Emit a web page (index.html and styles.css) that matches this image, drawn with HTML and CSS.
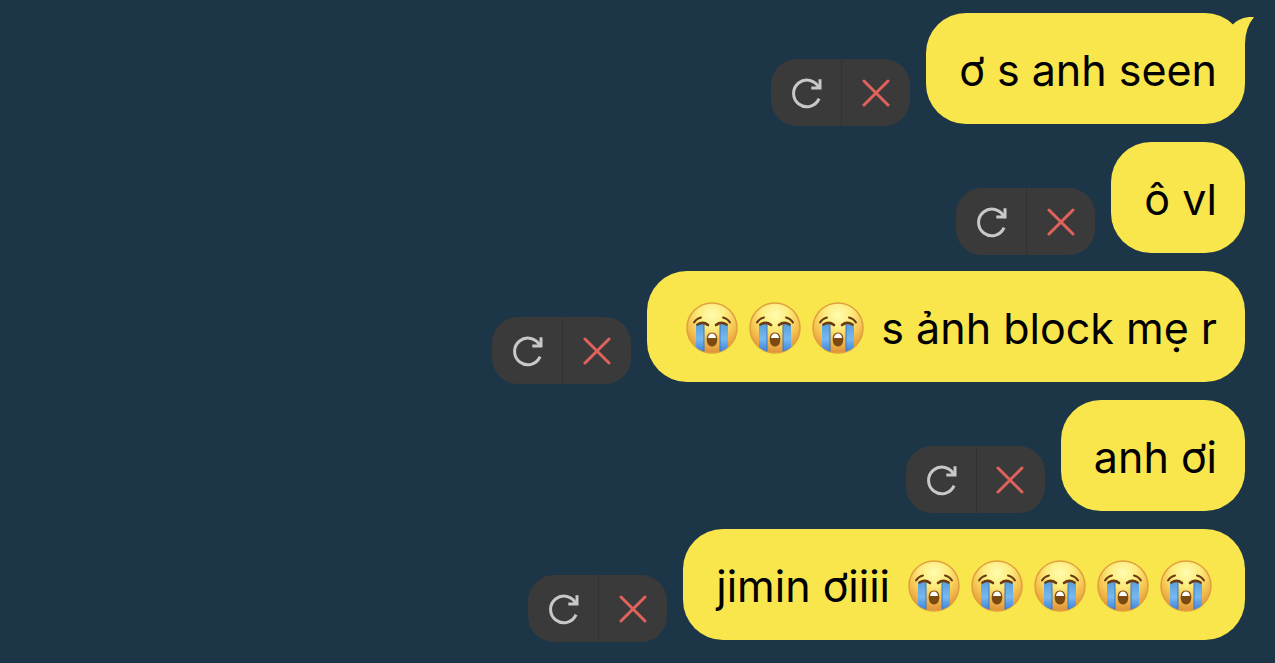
FILE: index.html
```html
<!DOCTYPE html>
<html lang="vi">
<head>
    <meta charset="UTF-8">
    <meta name="viewport" content="width=device-width, initial-scale=1.0">
    <title>Chat</title>
    <link rel="stylesheet" href="styles.css">
</head>
<body>

    <!-- shared icons -->
    <svg class="sprite" aria-hidden="true">
        <defs>
            <radialGradient id="face" cx="50%" cy="24%" r="78%">
                <stop offset="0" stop-color="#fffcb0"/>
                <stop offset="0.35" stop-color="#fdec7c"/>
                <stop offset="0.65" stop-color="#f6c24f"/>
                <stop offset="1" stop-color="#dd8c36"/>
            </radialGradient>
            <linearGradient id="tear" x1="0" y1="0" x2="0" y2="1">
                <stop offset="0" stop-color="#5a9fdc"/>
                <stop offset="0.5" stop-color="#76b9f0"/>
                <stop offset="1" stop-color="#3478d4"/>
            </linearGradient>
            <clipPath id="round"><circle cx="26" cy="26" r="25"/></clipPath>
        </defs>
        <symbol id="cry" viewBox="0 0 52 52">
            <circle cx="26" cy="26" r="25" fill="url(#face)" stroke="#e0a03c" stroke-width="1.500"/>
            <g clip-path="url(#round)">
                <path d="M10 22h8v30h-8zM34 22h8v30h-8z" fill="url(#tear)"/>
                <path d="M18 23v28M34 23v28" stroke="#3c78bd" stroke-width="1"/>
            </g>
            <g fill="none" stroke="#6a3b12" stroke-linecap="round">
                <path d="M8 20.500Q10.500 16.500 15 15.500M44 20.500Q41.500 16.500 37 15.500" stroke-width="2"/>
                <path d="M11.500 22.500Q17 19 22 23M30 23Q35 19 40.500 22.500" stroke-width="2.600"/>
            </g>
            <path d="M26 30.500c3.500 0 5.300 2.800 5.300 6.500s-1.300 7.500-5.300 7.500-5.300-3.800-5.300-7.500 1.800-6.500 5.300-6.500z" fill="#7b4a12"/>
            <path d="M22 36c.3-3 1.700-4.500 4-4.500s3.700 1.500 4 4.500z" fill="#fff"/>
        </symbol>
        <symbol id="retry" viewBox="-3 0 36 32">
            <path d="M28.100 21.700A13.300 13.300 0 1 1 28 11" fill="none" stroke="#c8c8c9" stroke-width="3"/>
            <path d="M29 2.300V11H20.300" fill="none" stroke="#c8c8c9" stroke-width="3"/>
        </symbol>
        <symbol id="cross" viewBox="0 0 28 28">
            <path d="M2 2L26 26M26 2L2 26" fill="none" stroke="#e0625b" stroke-width="3" stroke-linecap="round"/>
        </symbol>
    </svg>

    <main class="chat">
        <div class="message">
            <div class="actions">
                <button type="button" aria-label="Resend"><svg class="retry"><use href="#retry"/></svg></button>
                <button type="button" aria-label="Delete"><svg class="cross"><use href="#cross"/></svg></button>
            </div>
            <div class="bubble">
                <span>ơ s anh seen</span>
                <svg class="tail" viewBox="0 0 26 42" aria-hidden="true">
                    <path d="M4 11.500C9 6 16 3.500 25 4Q16 15 16 31V42H6z" fill="#f9e54c"/>
                </svg>
            </div>
        </div>

        <div class="message">
            <div class="actions">
                <button type="button" aria-label="Resend"><svg class="retry"><use href="#retry"/></svg></button>
                <button type="button" aria-label="Delete"><svg class="cross"><use href="#cross"/></svg></button>
            </div>
            <div class="bubble"><span>ô vl</span></div>
        </div>

        <div class="message">
            <div class="actions">
                <button type="button" aria-label="Resend"><svg class="retry"><use href="#retry"/></svg></button>
                <button type="button" aria-label="Delete"><svg class="cross"><use href="#cross"/></svg></button>
            </div>
            <div class="bubble">
                <svg class="emoji"><use href="#cry"/></svg>
                <svg class="emoji"><use href="#cry"/></svg>
                <svg class="emoji"><use href="#cry"/></svg>
                <span class="after">s ảnh block mẹ r</span>
            </div>
        </div>

        <div class="message">
            <div class="actions">
                <button type="button" aria-label="Resend"><svg class="retry"><use href="#retry"/></svg></button>
                <button type="button" aria-label="Delete"><svg class="cross"><use href="#cross"/></svg></button>
            </div>
            <div class="bubble"><span>anh ơi</span></div>
        </div>

        <div class="message">
            <div class="actions">
                <button type="button" aria-label="Resend"><svg class="retry"><use href="#retry"/></svg></button>
                <button type="button" aria-label="Delete"><svg class="cross"><use href="#cross"/></svg></button>
            </div>
            <div class="bubble">
                <span class="before">jimin ơiiii</span>
                <svg class="emoji"><use href="#cry"/></svg>
                <svg class="emoji"><use href="#cry"/></svg>
                <svg class="emoji"><use href="#cry"/></svg>
                <svg class="emoji"><use href="#cry"/></svg>
                <svg class="emoji"><use href="#cry"/></svg>
            </div>
        </div>
    </main>

</body>
</html>
```
FILE: styles.css
```css
* { box-sizing: border-box; }
body { margin: 0; background: #1c3648; color: #000; font-family: Inter, "Noto Sans", sans-serif; }
.sprite { position: absolute; width: 0; height: 0; }

.chat { display: flex; flex-direction: column; gap: 18px; padding: 13px 30px 23px; }
.message { display: flex; justify-content: flex-end; align-items: flex-end; gap: 16px; }

.bubble { position: relative; display: flex; align-items: center; min-height: 111px; padding: 3px 28px 0 33px; border-radius: 40px; background: #f9e54c; font-size: 43px; line-height: 56px; }
.tail { position: absolute; top: 0; right: -10px; width: 26px; height: 42px; }
.emoji { width: 52px; height: 52px; margin: 0 5px 0 6px; }
.after { margin-left: 12px; }
.before { margin-right: 12px; }

.actions { display: flex; flex: none; height: 67px; margin-bottom: -2px; border-radius: 26px; background: #3a3a3b; overflow: hidden; }
.actions button { display: flex; align-items: center; justify-content: center; width: 70px; padding: 0; border: 0; background: none; cursor: pointer; }
.actions button + button { width: 69px; padding-right: 1px; border-left: 1px solid #313234; }
.retry { width: 36px; height: 32px; }
.cross { width: 28px; height: 28px; }
```
